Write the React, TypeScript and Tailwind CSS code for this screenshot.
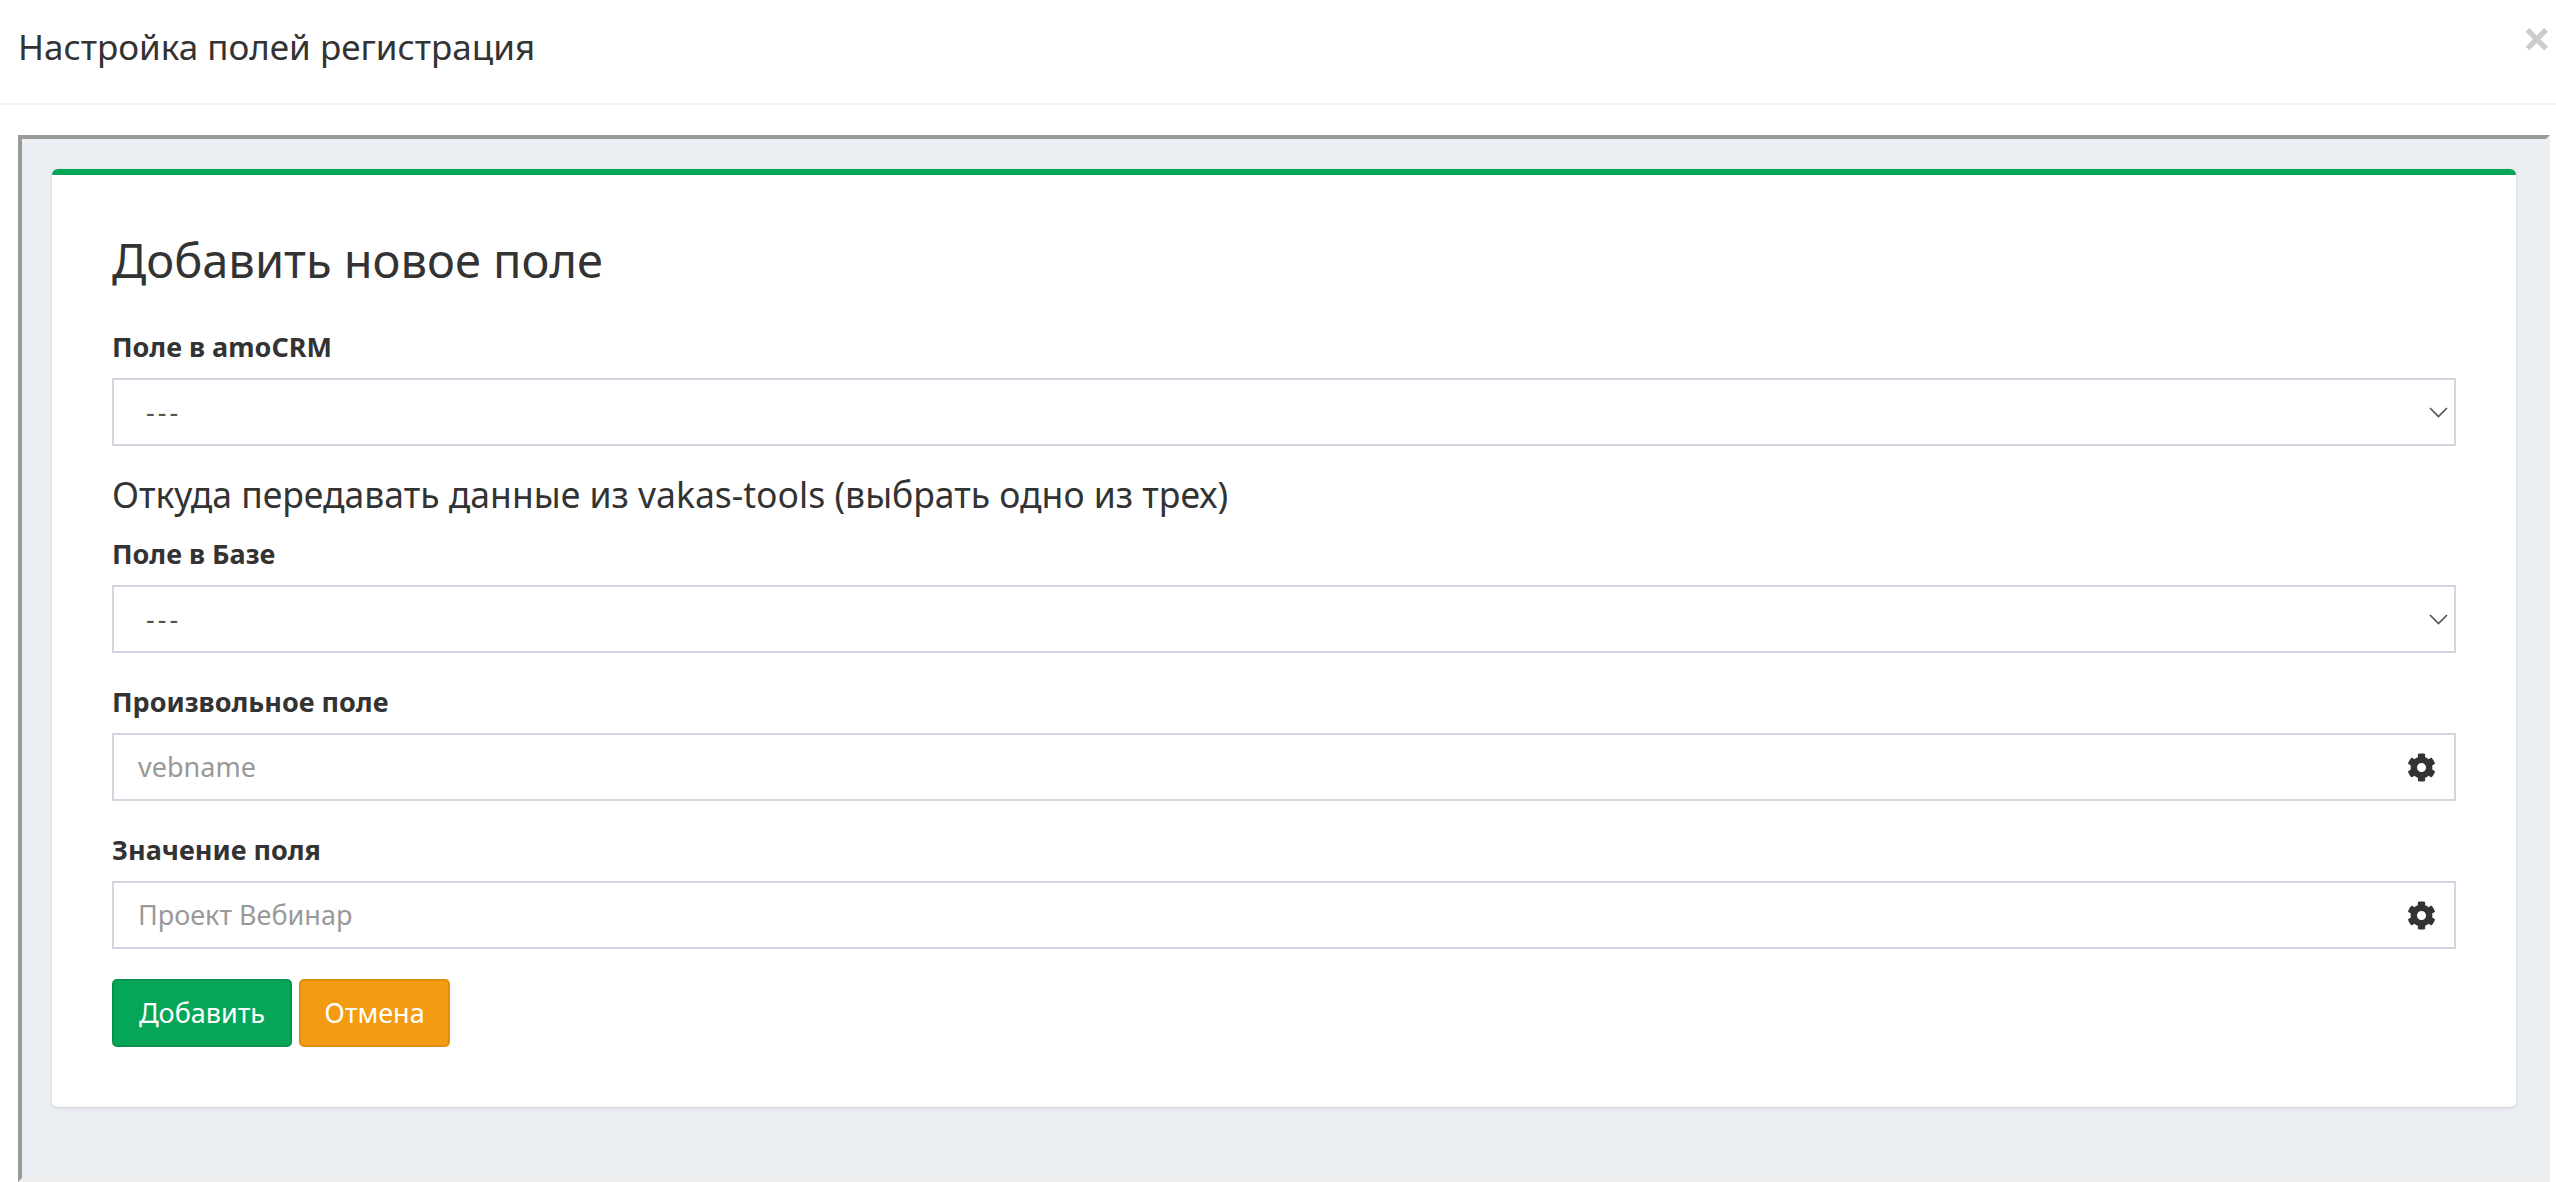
import { FaCog } from "react-icons/fa";

function Label({ text }: { text: string }) {
  return <label className="block text-[27px] leading-[34px] font-bold text-[#333333]">{text}</label>;
}

function SelectBox() {
  return (
    <div className="mt-[14px] flex h-[68px] items-center justify-between border-2 border-[#d1d6e0] bg-white pl-[32px] pr-[6px] text-[27px] tracking-[3px] text-[#555555]">
      <span>---</span>
      <svg width="19" height="11" viewBox="0 0 19 11" fill="none" stroke="#555555" strokeWidth="1.7">
        <path d="M1 1 L9.5 9.5 L18 1" />
      </svg>
    </div>
  );
}

function InputBox({ placeholder }: { placeholder: string }) {
  return (
    <div className="mt-[14px] flex h-[68px] items-center justify-between border-2 border-[#d1d6e0] bg-white pl-[24px] pr-[18px] text-[27px] text-[#999999]">
      <span>{placeholder}</span>
      <FaCog className="h-[29px] w-[29px] text-[#333333]" />
    </div>
  );
}

export default function App() {
  return (
    <div className="flex h-[1182px] w-[2556px] flex-col overflow-hidden bg-white font-['Noto_Sans',sans-serif]">
      <div className="flex h-[105px] shrink-0 items-start justify-between border-b-2 border-[#f3f3f3] pl-[18px] pr-[5px]">
        <h4 className="mt-[24px] text-[35px] leading-[46px] text-[#333333]">Настройка полей регистрация</h4>
        <span className="mt-[8px] text-[50px] leading-[60px] font-bold text-[#cccccc]">×</span>
      </div>
      <div className="mt-[30px] ml-[18px] mr-[6px] grow border-4 border-t-[#9a9a9a] border-l-[#9a9a9a] border-r-[#eeeeee] border-b-[#eeeeee] bg-[#ebeef3] p-[30px]">
        <div className="h-[938px] rounded-[6px] border-t-[6px] border-[#06a659] bg-white px-[60px] pt-[55px] shadow-[0_1px_3px_rgba(0,0,0,0.15)]">
          <h3 className="text-[47px] leading-[60px] text-[#333333]">Добавить новое поле</h3>
          <div className="mt-[40px]">
            <Label text="Поле в amoCRM" />
            <SelectBox />
          </div>
          <h4 className="mt-[30px] text-[35.5px] leading-[36px] text-[#333333]">
            Откуда передавать данные из vakas-tools (выбрать одно из трех)
          </h4>
          <div className="mt-[25px]">
            <Label text="Поле в Базе" />
            <SelectBox />
          </div>
          <div className="mt-[32px]">
            <Label text="Произвольное поле" />
            <InputBox placeholder="vebname" />
          </div>
          <div className="mt-[32px]">
            <Label text="Значение поля" />
            <InputBox placeholder="Проект Вебинар" />
          </div>
          <div className="mt-[30px] flex gap-[7px]">
            <button className="h-[68px] w-[180px] rounded-[5px] border-2 border-[#05944f] bg-[#06a659] text-[27px] text-white">
              Добавить
            </button>
            <button className="h-[68px] w-[151px] rounded-[5px] border-2 border-[#e08e0b] bg-[#f39c12] text-[27px] text-white">
              Отмена
            </button>
          </div>
        </div>
      </div>
    </div>
  );
}
